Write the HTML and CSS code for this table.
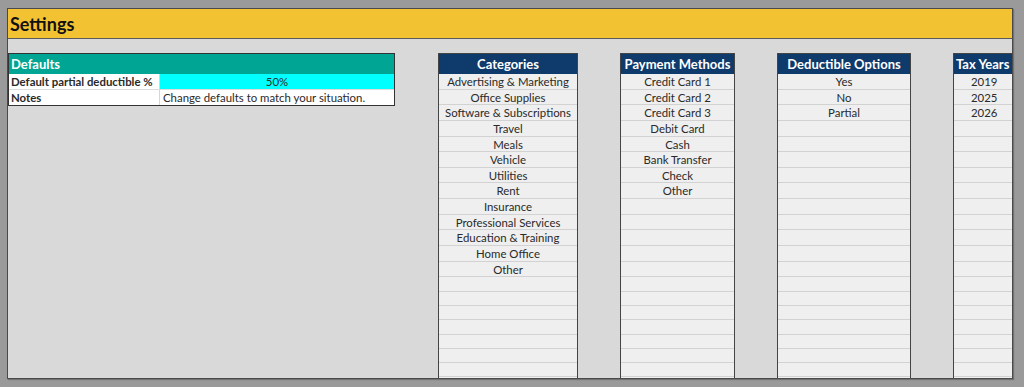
FILE: index.html
```html
<!DOCTYPE html>
<html>
<head>
<meta charset="utf-8">
<link rel="stylesheet" href="styles.css">
</head>
<body>
<div class="sheet">
  <div class="title">Settings</div>
  <div class="content">
    <div class="defaults">
      <div class="def-head">Defaults</div>
      <div class="def-row">
        <div class="def-label">Default partial deductible %</div>
        <div class="def-value cyan">50%</div>
      </div>
      <div class="def-row last">
        <div class="def-label">Notes</div>
        <div class="def-value left">Change defaults to match your situation.</div>
      </div>
    </div>

    <div class="list cat">
      <div class="list-head">Categories</div>
      <div class="row">Advertising &amp; Marketing</div>
      <div class="row">Office Supplies</div>
      <div class="row">Software &amp; Subscriptions</div>
      <div class="row">Travel</div>
      <div class="row">Meals</div>
      <div class="row">Vehicle</div>
      <div class="row">Utilities</div>
      <div class="row">Rent</div>
      <div class="row">Insurance</div>
      <div class="row">Professional Services</div>
      <div class="row">Education &amp; Training</div>
      <div class="row">Home Office</div>
      <div class="row">Other</div>
      <div class="row short"></div><div class="row short"></div><div class="row short"></div><div class="row short"></div><div class="row short"></div><div class="row short"></div><div class="row short"></div><div class="row short"></div>
    </div>

    <div class="list pay">
      <div class="list-head">Payment Methods</div>
      <div class="row">Credit Card 1</div>
      <div class="row">Credit Card 2</div>
      <div class="row">Credit Card 3</div>
      <div class="row">Debit Card</div>
      <div class="row">Cash</div>
      <div class="row">Bank Transfer</div>
      <div class="row">Check</div>
      <div class="row">Other</div>
      <div class="row"></div><div class="row"></div><div class="row"></div><div class="row"></div><div class="row"></div>
      <div class="row short"></div><div class="row short"></div><div class="row short"></div><div class="row short"></div><div class="row short"></div><div class="row short"></div><div class="row short"></div><div class="row short"></div>
    </div>

    <div class="list ded">
      <div class="list-head">Deductible Options</div>
      <div class="row">Yes</div>
      <div class="row">No</div>
      <div class="row">Partial</div>
      <div class="row"></div><div class="row"></div><div class="row"></div><div class="row"></div><div class="row"></div><div class="row"></div><div class="row"></div><div class="row"></div><div class="row"></div><div class="row"></div>
      <div class="row short"></div><div class="row short"></div><div class="row short"></div><div class="row short"></div><div class="row short"></div><div class="row short"></div><div class="row short"></div><div class="row short"></div>
    </div>

    <div class="list tax">
      <div class="list-head">Tax Years</div>
      <div class="row">2019</div>
      <div class="row">2025</div>
      <div class="row">2026</div>
      <div class="row"></div><div class="row"></div><div class="row"></div><div class="row"></div><div class="row"></div><div class="row"></div><div class="row"></div><div class="row"></div><div class="row"></div><div class="row"></div>
      <div class="row short"></div><div class="row short"></div><div class="row short"></div><div class="row short"></div><div class="row short"></div><div class="row short"></div><div class="row short"></div><div class="row short"></div>
    </div>
  </div>
</div>
</body>
</html>
```

FILE: styles.css
```css
* { box-sizing: border-box; }
html, body { margin: 0; padding: 0; }
body {
  background: #9a9a9a;
  font-family: Lato, "Liberation Sans", sans-serif;
  color: #2a2a2a;
  width: 1024px;
  height: 387px;
  overflow: hidden;
}
.sheet {
  margin: 8px 0 0 7px;
  width: 1006px;
  height: 371px;
  border: 1px solid #4a4a4a;
  background: #d9d9d9;
  display: flex;
  flex-direction: column;
  overflow: hidden;
  box-shadow: 1px 1px 1px rgba(0,0,0,0.25);
}
.title {
  height: 30px;
  background: #f3c232;
  border-bottom: 1px solid #5a5a5a;
  font-weight: 700;
  font-size: 18px;
  line-height: 30px;
  padding-left: 2px;
  color: #111;
  flex: none;
}
.content {
  flex: 1;
  display: flex;
  align-items: stretch;
  padding-top: 14px;
  min-height: 0;
}
.defaults {
  align-self: flex-start;
  flex: none;
  width: 387px;
  border: 1px solid #333;
  background: #fff;
  font-size: 11.4px;
}
.def-head {
  height: 20px;
  background: #00a594;
  color: #fff;
  font-weight: 700;
  font-size: 13px;
  line-height: 21px;
  padding-left: 2px;
}
.def-row {
  display: flex;
  height: 16px;
  border-bottom: 1px solid #dcdcdc;
}
.def-row.last { height: 15px; border-bottom: none; }
.def-label {
  width: 151px;
  flex: none;
  font-weight: 700;
  padding-left: 2px;
  line-height: 16px;
  white-space: nowrap;
  border-right: 1px solid #d6d6d6;
}
.def-value {
  flex: 1;
  text-align: center;
  line-height: 16px;
  white-space: nowrap;
}
.def-value.left { text-align: left; padding-left: 3px; }
.cyan { background: #00ffff; }

.list {
  border: 1px solid #444;
  border-bottom: none;
  background: #efefef;
  overflow: hidden;
  flex: none;
}
.cat { width: 140px; margin-left: 43px; }
.pay { width: 115px; margin-left: 42px; }
.ded { width: 134px; margin-left: 42px; }
.tax { width: 64px; margin-left: 42px; }
.list-head {
  height: 20px;
  background: #0e3a6c;
  color: #fff;
  font-weight: 700;
  font-size: 13px;
  line-height: 21px;
  text-align: center;
  white-space: nowrap;
}
.tax .list-head { text-align: left; padding-left: 2px; }
.tax .row { text-align: left; padding-left: 17px; }
.row {
  height: 15.65px;
  border-bottom: 1px solid #d2d2d2;
  font-size: 11.4px;
  line-height: 16px;
  text-align: center;
  white-space: nowrap;
}
.row.short { height: 14.3px; }
```
